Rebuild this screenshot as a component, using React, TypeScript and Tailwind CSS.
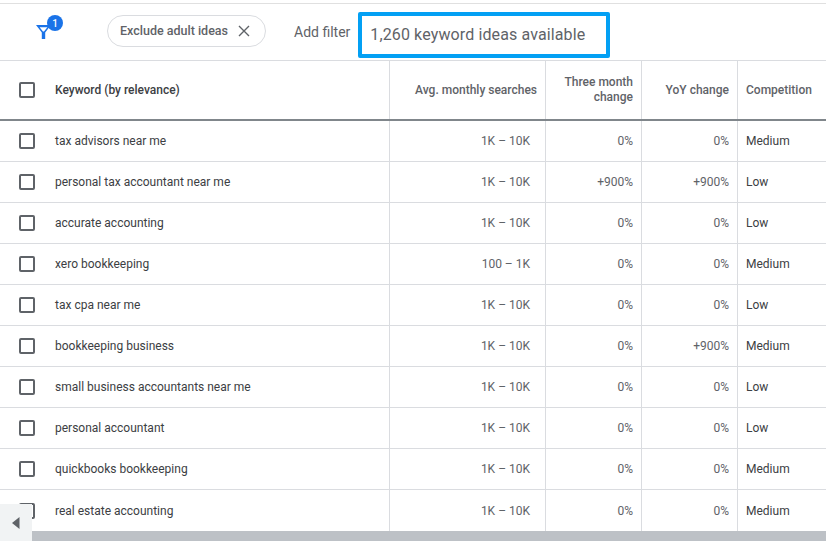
const rows: [string, string, string, string, string][] = [
  ["tax advisors near me", "1K – 10K", "0%", "0%", "Medium"],
  ["personal tax accountant near me", "1K – 10K", "+900%", "+900%", "Low"],
  ["accurate accounting", "1K – 10K", "0%", "0%", "Low"],
  ["xero bookkeeping", "100 – 1K", "0%", "0%", "Medium"],
  ["tax cpa near me", "1K – 10K", "0%", "0%", "Low"],
  ["bookkeeping business", "1K – 10K", "0%", "+900%", "Medium"],
  ["small business accountants near me", "1K – 10K", "0%", "0%", "Low"],
  ["personal accountant", "1K – 10K", "0%", "0%", "Low"],
  ["quickbooks bookkeeping", "1K – 10K", "0%", "0%", "Medium"],
  ["real estate accounting", "1K – 10K", "0%", "0%", "Medium"],
];

const cols = "grid grid-cols-[390px_156px_96px_96px_89px]";

function Box() {
  return <div className="w-[16px] h-[16px] rounded-[2px] border-2 border-[#5f6368] shrink-0" />;
}

export default function App() {
  return (
    <div className="relative w-[826px] h-[541px] overflow-hidden bg-white font-['Roboto',sans-serif] text-[#3c4043]">
      <div className="h-[4px] border-b border-[#e0e0e0]" />
      <div className="h-[57px] flex items-start border-b border-[#dadce0]">
        <div className="relative ml-[35px] mt-[19px] w-[16px] h-[18px]">
          <svg width="17" height="17" viewBox="0 0 17 17" className="block">
            <path d="M1 2h15L10.2 9.6V16H6.8V9.6z M4.6 4.2 8 8.6h1L12.4 4.2z" fill="#1a73e8" fillRule="evenodd" />
          </svg>
          <div className="absolute left-[12px] top-[-8px] w-[16px] h-[16px] rounded-full bg-[#1a73e8] text-white text-[10px] font-medium flex items-center justify-center">1</div>
        </div>
        <div className="ml-[56px] mt-[11px] w-[159px] h-[32px] rounded-full border border-[#dadce0] flex items-center pl-[12px] text-[12.5px] font-medium text-[#5f6368]">
          <span className="whitespace-nowrap">Exclude adult ideas</span>
          <svg width="12" height="12" viewBox="0 0 12 12" className="ml-[10px]">
            <path d="M1 1l10 10M11 1L1 11" stroke="#5f6368" strokeWidth="1.4" fill="none" />
          </svg>
        </div>
        <span className="ml-[28px] mt-[19px] text-[14px] leading-[18px] text-[#5f6368] whitespace-nowrap">Add filter</span>
        <div className="ml-[8px] mt-[8px] w-[252px] h-[46px] border-[4px] border-[#03a0f4] rounded-[2px] flex items-center pl-[8px] text-[16px] text-[#5f6368] whitespace-nowrap tracking-[0.12px]">
          1,260 keyword ideas available
        </div>
      </div>

      <div className={`${cols} h-[60px] border-b-[2px] border-[#80868b] text-[12px] font-medium text-[#5f6368]`}>
        <div className="flex items-center pl-[19px] border-r border-[#dadce0]">
          <Box />
          <span className="ml-[20px] text-[#3c4043]">Keyword (by relevance)</span>
        </div>
        <div className="flex items-center justify-end pr-[8px] border-r border-[#dadce0] whitespace-nowrap">Avg. monthly searches</div>
        <div className="flex items-center justify-end pr-[8px] border-r border-[#dadce0] text-right leading-[15px]">Three month<br />change</div>
        <div className="flex items-center justify-end pr-[8px] border-r border-[#dadce0] whitespace-nowrap">YoY change</div>
        <div className="flex items-center pl-[8px] whitespace-nowrap">Competition</div>
      </div>

      <div>
        {rows.map((r, i) => (
          <div key={r[0]} className={`${cols} h-[41px] text-[12px] ${i < rows.length - 1 ? "border-b border-[#dadce0]" : ""}`}>
            <div className="flex items-center pl-[19px] border-r border-[#dadce0]">
              <Box />
              <span className="ml-[20px] whitespace-nowrap">{r[0]}</span>
            </div>
            <div className="flex items-center justify-end pr-[15px] border-r border-[#dadce0] text-[#5f6368]">{r[1]}</div>
            <div className="flex items-center justify-end pr-[8px] border-r border-[#dadce0] text-[#5f6368]">{r[2]}</div>
            <div className="flex items-center justify-end pr-[8px] border-r border-[#dadce0] text-[#5f6368]">{r[3]}</div>
            <div className="flex items-center pl-[8px]">{r[4]}</div>
          </div>
        ))}
      </div>

      <div className="absolute left-0 right-0 bottom-0 h-[10px] bg-[#bdc1c6]" />
      <div className="absolute left-0 bottom-0 w-[32px] h-[37px] bg-[#f1f3f4] flex items-center justify-center">
        <svg width="8" height="12" viewBox="0 0 8 12"><path d="M7.5 0v12L0 6z" fill="#5f6368" /></svg>
      </div>
    </div>
  );
}
